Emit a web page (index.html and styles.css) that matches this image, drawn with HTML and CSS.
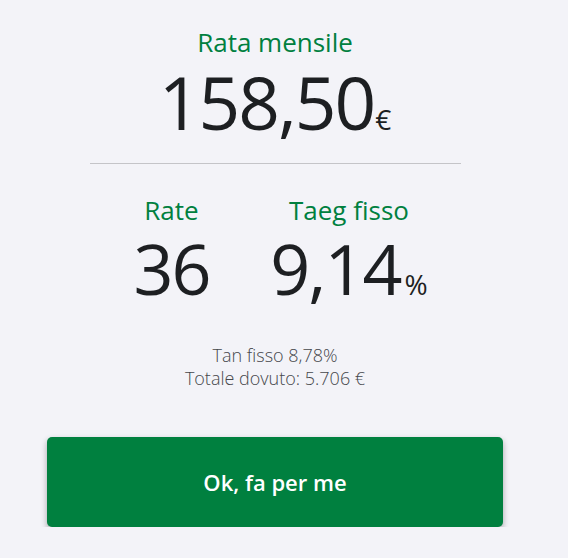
FILE: index.html
```html
<!DOCTYPE html>
<html lang="it">
<head>
    <meta charset="UTF-8">
    <meta name="viewport" content="width=device-width, initial-scale=1.0">
    <title>Rata mensile</title>
    <link rel="stylesheet" href="styles.css">
</head>
<body>

    <main class="summary">
        <div class="label">Rata mensile</div>
        <div class="amount">158,50<span class="unit">€</span></div>

        <hr class="divider">

        <div class="stats">
            <div class="stat">
                <div class="label">Rate</div>
                <div class="value">36</div>
            </div>
            <div class="stat">
                <div class="label">Taeg fisso</div>
                <div class="value">9,14<span class="unit percent">%</span></div>
            </div>
        </div>

        <div class="details">
            <div>Tan fisso 8,78%</div>
            <div>Totale dovuto: 5.706 €</div>
        </div>

        <button class="confirm">Ok, fa per me</button>
    </main>

</body>
</html>
```

FILE: styles.css
```css
body {
    margin: 0;
    background-color: #f3f3f8;
    font-family: "Open Sans", "Noto Sans", sans-serif;
    color: #1d1f22;
}
.summary {
    width: 550px;
    display: flex;
    flex-direction: column;
    align-items: center;
    padding-top: 27px;
}
.label {
    color: #00803f;
    font-size: 26px;
    line-height: 30px;
}
.amount {
    font-size: 73px;
    line-height: 80px;
    letter-spacing: -2px;
    margin-top: 5px;
}
.unit {
    font-size: 28px;
    line-height: 1;
    letter-spacing: 0;
    margin-left: 1px;
}
.unit.percent {
    margin-left: 4px;
}
.divider {
    width: 371px;
    border: none;
    border-top: 1px solid #c4c4c8;
    margin: 21px 0 0;
}
.stats {
    display: grid;
    grid-template-columns: 148px 207px;
    margin-top: 31px;
}
.stat {
    display: flex;
    flex-direction: column;
    align-items: center;
}
.value {
    font-size: 70px;
    line-height: 80px;
    letter-spacing: -2px;
    margin-top: 3px;
}
.details {
    margin-top: 36px;
    text-align: center;
    font-size: 18px;
    line-height: 23px;
    font-weight: 300;
    color: #45474b;
}
.confirm {
    margin-top: 47px;
    width: 456px;
    height: 90px;
    border: none;
    border-radius: 5px;
    background-color: #00803f;
    color: #fff;
    font-family: inherit;
    font-size: 22px;
    font-weight: 600;
    box-shadow: 0 3px 6px rgba(0, 0, 0, 0.32);
    cursor: pointer;
}
```
